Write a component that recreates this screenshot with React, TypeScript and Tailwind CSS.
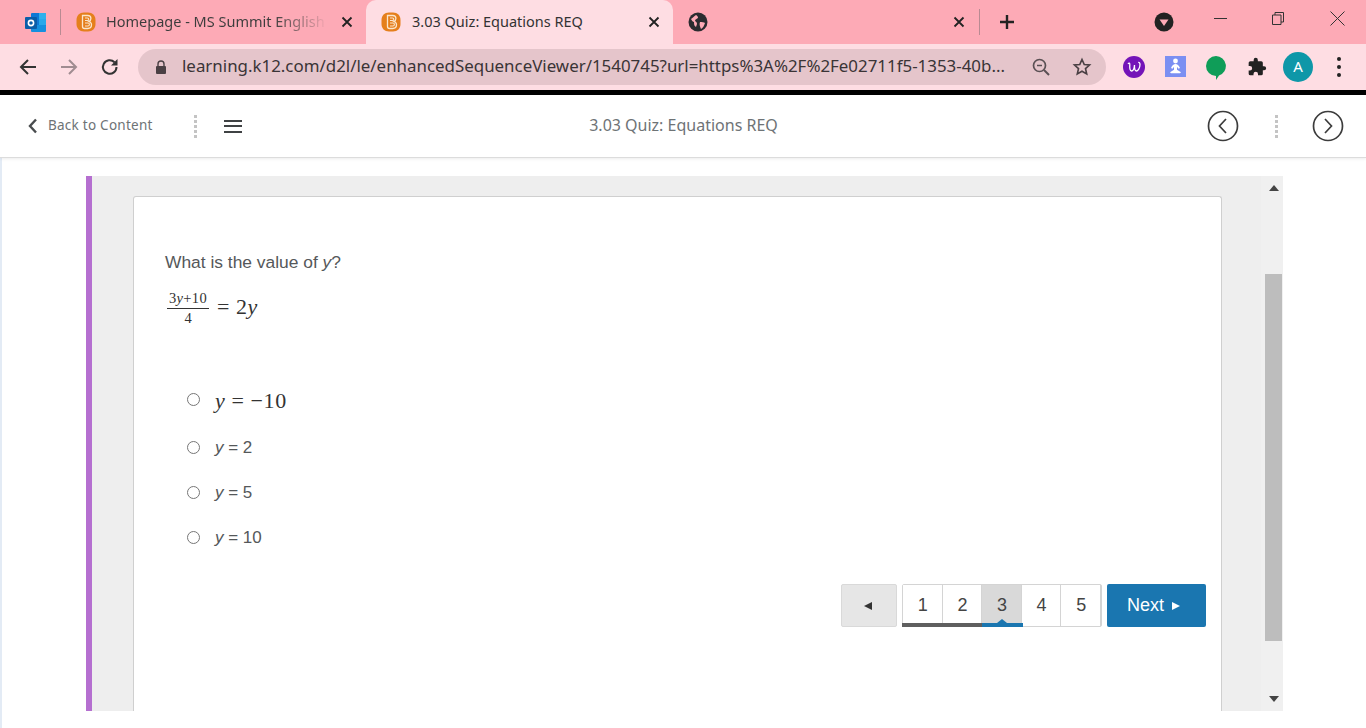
import React from 'react';

const uiFont = "font-['Noto_Sans',sans-serif]";
const arial = "font-['Liberation_Sans',Arial,sans-serif]";
const mathFont = "font-['Liberation_Serif','Times_New_Roman',serif]";

// Brightspace logo used in both tabs
const BrightspaceIcon = () => (
  <svg width="20" height="20" viewBox="0 0 20 20" className="shrink-0">
    <path d="M8 .5h4c4.500 0 7.500 3 7.500 7.500v4c0 4.500-3 7.500-7.500 7.500H8C3.500 19.500.5 16.500.5 12V8C.5 3.500 3.500.5 8 .5Z" fill="#e57f1c" />
    <path d="M6.500 3.500h5.200c2 0 3.200 1.400 3.200 3 0 1.400-.8 2.500-2 3 1.600.5 2.600 1.700 2.600 3.300 0 2.200-1.600 3.700-3.800 3.700H8.500c-1.200 0-2-.8-2-2V3.500Z" fill="none" stroke="#fbe6cc" strokeWidth="1.300" />
    <path d="M9 6h2.500c.8 0 1.300.5 1.300 1.200S12 8.500 11.300 8.500H9M9 11h3c.8 0 1.400.6 1.400 1.400S12.800 14 12 14H9" fill="none" stroke="#fbe6cc" strokeWidth="1.100" />
  </svg>
);

const OutlookIcon = () => (
  <svg width="22" height="19" viewBox="0 0 22 19" className="shrink-0">
    <rect x="6" y="0" width="15" height="18" rx="1" fill="#0f78d4" />
    <rect x="14" y="0" width="7" height="6" fill="#2fb0ec" />
    <rect x="14" y="6" width="7" height="6" fill="#28a8ea" />
    <rect x="6" y="12" width="15" height="7" rx="1" fill="#1490df" />
    <rect x="0" y="4" width="12" height="12" rx="1" fill="#0a5ea8" />
    <circle cx="6" cy="10" r="2.600" fill="none" stroke="#fff" strokeWidth="1.600" />
  </svg>
);

const TabClose = () => (
  <svg width="12" height="12" viewBox="0 0 12 12" className="shrink-0">
    <path d="M1.500 1.500l9 9M10.500 1.500l-9 9" stroke="#222" strokeWidth="1.800" />
  </svg>
);

const GlobeIcon = () => (
  <svg width="20" height="20" viewBox="0 0 20 20" className="shrink-0">
    <circle cx="10" cy="10" r="9.500" fill="#2b2b2f" />
    <path d="M3 7c2-1 3-3 5-4 1 1 2 1 2 3-1 1-3 1-3 3 1 1 2 1 2 3l-1 3c-2-1-2-3-2-5-1 0-2-1-3-3Z M12 10c2 0 4 0 5 1-1 3-2 5-4 6-1-2-2-5-1-7Z" fill="#fdaab6" />
  </svg>
);

const CircleNav = ({ dir }: { dir: 'left' | 'right' }) => (
  <svg width="32" height="32" viewBox="0 0 32 32">
    <circle cx="16" cy="16" r="14.500" fill="none" stroke="#3c3c3c" strokeWidth="1.700" />
    <path d={dir === 'left' ? 'M19 9l-6.500 7 6.500 7' : 'M13 9l6.500 7-6.500 7'} fill="none" stroke="#3c3c3c" strokeWidth="1.700" />
  </svg>
);

const DotDivider = () => (
  <div className="flex flex-col gap-[2px]">
    {[0, 1, 2, 3, 4].map((i) => (
      <div key={i} className="w-[3px] h-[3px] bg-[#c4c4c4]" />
    ))}
  </div>
);

const Option = ({ gap, children }: { gap: string; children: React.ReactNode }) => (
  <div className={`flex items-center h-[24px] ${gap}`}>
    <input type="radio" name="answer" className="w-[13px] h-[13px] m-0 ml-[22px] shrink-0" />
    <div className={`ml-[15px] pt-[1px] text-[17px] text-[#55585a] ${arial}`}>{children}</div>
  </div>
);

const PageNum = ({ n, current }: { n: number; current?: boolean }) => (
  <div
    className={`flex-1 h-full flex items-center justify-center pl-[1px] text-[18px] text-[#444] border-r border-[#d4d4d4] last:border-r-0 ${
      current ? 'bg-[#d9d9d9]' : 'bg-white'
    }`}
  >
    {n}
  </div>
);

const App: React.FC = () => {
  return (
    <div className="h-[728px] w-[1366px] overflow-hidden flex flex-col bg-white">
      {/* Tab strip */}
      <div className={`h-[44px] bg-[#fdaab6] flex items-center shrink-0 ${uiFont}`}>
        <div className="ml-[25px]"><OutlookIcon /></div>
        <div className="ml-[13px] w-px h-[26px] bg-[#b98a92]" />
        <div className="ml-[15px]"><BrightspaceIcon /></div>
        <div className="ml-[10px] w-[222px] whitespace-nowrap overflow-hidden text-[14.500px] bg-linear-to-r from-[#3c3c3c] from-75% to-[#fdaab6] bg-clip-text text-transparent">
          Homepage - MS Summit English
        </div>
        <div className="ml-[13px]"><TabClose /></div>
        <div className="ml-[13px] w-[307px] h-[44px] bg-[#fedde3] rounded-t-[10px] flex items-center">
          <div className="ml-[15px]"><BrightspaceIcon /></div>
          <div className="ml-[11px] w-[235px] whitespace-nowrap text-[14.500px] text-[#333]">3.03 Quiz: Equations REQ</div>
          <div className="ml-[1px]"><TabClose /></div>
        </div>
        <div className="ml-[15px]"><GlobeIcon /></div>
        <div className="ml-[245px]"><TabClose /></div>
        <div className="ml-[14px] w-px h-[26px] bg-[#b98a92]" />
        <svg width="16" height="16" viewBox="0 0 16 16" className="ml-[19px]">
          <path d="M8 1v14M1 8h14" stroke="#222" strokeWidth="2.400" />
        </svg>
        <svg width="20" height="20" viewBox="0 0 20 20" className="ml-[139px]">
          <circle cx="10" cy="10" r="9.500" fill="#222" />
          <path d="M5.500 7.500h9L10 14Z" fill="#fdaab6" />
        </svg>
        <div className="ml-[40px] w-[13px] h-px bg-[#333] -mt-[7px]" />
        <svg width="12" height="13" viewBox="0 0 12 13" className="ml-[45px] -mt-[7px]">
          <path d="M.5 3h8.500v9.500H.5ZM3 3V.5h8.500V10H9" fill="none" stroke="#333" />
        </svg>
        <svg width="15" height="15" viewBox="0 0 15 15" className="ml-[46px] -mt-[7px]">
          <path d="M.5.5l14 14M14.500.5l-14 14" stroke="#333" strokeWidth="1" />
        </svg>
      </div>

      {/* Address bar */}
      <div className="h-[46px] bg-[#fedde3] flex items-center shrink-0">
        <svg width="20" height="20" viewBox="0 0 20 20" className="ml-[18px] -mt-[1px]">
          <path d="M18 10H3M10 3l-7 7 7 7" fill="none" stroke="#333" strokeWidth="2" />
        </svg>
        <svg width="20" height="20" viewBox="0 0 20 20" className="ml-[21px] -mt-[1px]">
          <path d="M2 10h15M10 3l7 7-7 7" fill="none" stroke="#a08c91" strokeWidth="2" />
        </svg>
        <svg width="20" height="20" viewBox="0 0 20 20" className="ml-[21px] -mt-[1px]">
          <path d="M16.500 10a6.800 6.800 0 1 1-2-4.800" fill="none" stroke="#333" strokeWidth="2" />
          <path d="M17.500 2v6.500H11Z" fill="#333" />
        </svg>
        <div className={`ml-[18px] w-[968px] h-[36px] rounded-full bg-[#e5c5cb] flex items-center ${uiFont}`}>
          <svg width="12" height="14" viewBox="0 0 12 14" className="ml-[17px]">
            <path d="M3 6V4a3 3 0 0 1 6 0v2" fill="none" stroke="#4a4044" strokeWidth="1.400" />
            <rect x="1" y="6" width="10" height="8" rx="1" fill="#4a4044" />
          </svg>
          <div className="ml-[15px] -mt-[2px] w-[830px] whitespace-nowrap text-[16.900px] text-[#3a3436]">
            learning.k12.com/d2l/le/enhancedSequenceViewer/1540745?url=https%3A%2F%2Fe02711f5-1353-40b...
          </div>
          <svg width="20" height="20" viewBox="0 0 20 20" className="ml-[19px]">
            <circle cx="8.500" cy="8.500" r="6" fill="none" stroke="#5a5054" strokeWidth="1.700" />
            <path d="M13 13l5 5" stroke="#5a5054" strokeWidth="1.900" />
            <path d="M6 8.500h5" stroke="#5a5054" strokeWidth="1.500" />
          </svg>
          <svg width="20" height="20" viewBox="0 0 24 24" className="ml-[21px]">
            <path d="M12 3l2.700 6 6.300.6-4.800 4.300 1.400 6.400L12 17l-5.600 3.300 1.400-6.400L3 9.600 9.300 9Z" fill="none" stroke="#4a4044" strokeWidth="2" />
          </svg>
        </div>
        <svg width="22" height="22" viewBox="0 0 22 22" className="ml-[17px] -mt-[1px]">
          <circle cx="11" cy="11" r="11" fill="#7414b8" />
          <path d="M5 8c1-1.500 2-1 1.800 1-.3 3 .2 6 1.700 6s2.800-3 3-6c-.2 3 .3 6 1.800 6s3.700-3 3.700-6.500c0-1.500-1-2.500-1.800-2" fill="none" stroke="#fff" strokeWidth="1.300" />
        </svg>
        <svg width="21" height="21" viewBox="0 0 21 21" className="ml-[20px] -mt-[1px]">
          <rect width="21" height="21" fill="#7b8ff2" />
          <circle cx="10.500" cy="5" r="2.400" fill="#fff" />
          <path d="M10.500 8c-2 0-3 1-4.500 4l1.500.8 1.500-2v3l-4 2.500 1 1h9l1-1-4-2.500v-3l1.500 2 1.500-.8c-1.500-3-2.500-4-4.500-4Z" fill="#fff" />
        </svg>
        <svg width="20" height="24" viewBox="0 0 20 24" className="ml-[20px] mt-[1px]">
          <path d="M10 0a10 10 0 0 1 3 19.500L10 24v-4A10 10 0 0 1 10 0Z" fill="#0f9d58" />
        </svg>
        <svg width="20" height="20" viewBox="0 0 24 24" className="ml-[21px] -mt-[1px]">
          <path d="M20.500 11H19V7a2 2 0 0 0-2-2h-4V3.500a2.500 2.500 0 0 0-5 0V5H4a2 2 0 0 0-2 2v3.800h1.500a2.700 2.700 0 0 1 0 5.400H2V20a2 2 0 0 0 2 2h3.800v-1.500a2.700 2.700 0 0 1 5.400 0V22H17a2 2 0 0 0 2-2v-4h1.500a2.500 2.500 0 0 0 0-5Z" fill="#222" />
        </svg>
        <div className={`ml-[16px] -mt-[1px] w-[30px] h-[30px] rounded-full bg-[#0e97a8] text-white text-[15px] flex items-center justify-center ${uiFont}`}>A</div>
        <div className="ml-[24px] -mt-[1px] flex flex-col gap-[4px]">
          <div className="w-[4px] h-[4px] rounded-full bg-[#222]" />
          <div className="w-[4px] h-[4px] rounded-full bg-[#222]" />
          <div className="w-[4px] h-[4px] rounded-full bg-[#222]" />
        </div>
      </div>

      <div className="h-[5px] bg-black shrink-0" />

      {/* Content nav */}
      <div className={`h-[63px] bg-white border-b border-[#dcdcdc] shadow-[0_1px_3px_rgba(0,0,0,0.08)] flex items-center shrink-0 relative ${uiFont}`}>
        <svg width="10" height="16" viewBox="0 0 10 16" className="ml-[28px]">
          <path d="M8 1.500L2 8l6 6.500" fill="none" stroke="#494c4e" strokeWidth="2.400" />
        </svg>
        <div className="ml-[10px] -mt-[1px] w-[146px] text-[13.500px] text-[#6e7376] tracking-[0.25px]">Back to Content</div>
        <DotDivider />
        <div className="ml-[27px] w-[18px] flex flex-col gap-[3.500px]">
          <div className="h-[2px] bg-[#3f4244]" />
          <div className="h-[2px] bg-[#3f4244]" />
          <div className="h-[2px] bg-[#3f4244]" />
        </div>
        <div className="ml-[346px] -mt-[2px] w-[191px] text-center whitespace-nowrap text-[16px] text-[#6e7376]">3.03 Quiz: Equations REQ</div>
        <div className="ml-[428px]"><CircleNav dir="left" /></div>
        <div className="ml-[36px]"><DotDivider /></div>
        <div className="ml-[34px]"><CircleNav dir="right" /></div>
      </div>

      {/* Page body */}
      <div className="flex-1 min-h-0 flex flex-col border-l-2 border-[#e3ebf5]">
        <div className="h-[18px] shrink-0" />
        <div className="ml-[84px] w-[1197px] h-[535px] shrink-0 bg-[#eeeeee] border-l-[6px] border-[#b56fd0] flex">
          <div className="ml-[41px] mt-[20px] w-[1089px] bg-white border border-b-0 border-[#cfcfcf] rounded-t-[3px] pl-[31px] pt-[55px] shrink-0">
            <div className={`text-[17.400px] leading-[20px] text-[#55585a] ${arial}`}>
              What is the value of <i>y</i>?
            </div>
            <div className={`mt-[18px] ml-[2px] flex items-center text-[#333] ${mathFont}`}>
              <div className="flex flex-col items-center w-[42px]">
                <div className="text-[14.500px] leading-[16px] border-b border-[#333] w-full text-center pb-[2px] tracking-[0.3px] whitespace-nowrap">3<i>y</i>+10</div>
                <div className="text-[14.500px] leading-[16px] pt-[1px]">4</div>
              </div>
              <div className="ml-[8px] pb-[2px] text-[22px] leading-[24px] whitespace-nowrap tracking-[0.5px]">= 2<i>y</i></div>
            </div>

            <Option gap="mt-[61px]">
              <span className={`block pt-[2px] ${mathFont} text-[22px] text-[#333] tracking-[0.6px]`}><i>y</i> = −10</span>
            </Option>
            <Option gap="mt-[24px]"><i>y</i> = 2</Option>
            <Option gap="mt-[21px]"><i>y</i> = 5</Option>
            <Option gap="mt-[21px]"><i>y</i> = 10</Option>

            {/* Pager */}
            <div className={`mt-[35px] mr-[15px] flex justify-end items-stretch h-[43px] ${arial}`}>
              <div className="w-[56px] bg-[#e6e6e6] border border-[#d9d9d9] rounded-[2px] flex items-center justify-center pr-[2px]">
                <div className="w-0 h-0 border-y-[4px] border-y-transparent border-r-[8px] border-r-[#333]" />
              </div>
              <div className="ml-[5px] w-[200px] border border-[#d4d4d4] rounded-[2px] relative flex">
                <PageNum n={1} />
                <PageNum n={2} />
                <PageNum n={3} current />
                <PageNum n={4} />
                <PageNum n={5} />
                <div className="absolute -left-px -bottom-px w-[80px] h-[4px] bg-[#5f5f5f]" />
                <div className="absolute left-[79px] -bottom-px w-[41px] h-[4px] bg-[#1a76b0]" />
                <div className="absolute left-[94px] bottom-[3px] w-0 h-0 border-x-[5px] border-x-transparent border-b-[4px] border-b-[#1a76b0]" />
              </div>
              <div className="ml-[5px] w-[99px] bg-[#1a76b0] rounded-[2px] text-white text-[18px] flex items-center justify-center gap-[8px] pr-[6px]">
                Next
                <div className="w-0 h-0 border-y-[4px] border-y-transparent border-l-[8px] border-l-white" />
              </div>
            </div>
          </div>

          {/* Scrollbar */}
          <div className="ml-[39px] w-[22px] pl-[4px] pr-[1px] bg-[#f0f0f0] flex flex-col items-center shrink-0">
            <div className="h-[98px] w-full shrink-0 flex justify-center pt-[9px]">
              <div className="w-0 h-0 border-x-[5px] border-x-transparent border-b-[6px] border-b-[#444]" />
            </div>
            <div className="h-[367px] w-full bg-[#bdbdbd] shrink-0" />
            <div className="flex-1 flex items-end pb-[9px]">
              <div className="w-0 h-0 border-x-[5px] border-x-transparent border-t-[6px] border-t-[#444]" />
            </div>
          </div>
        </div>
      </div>
    </div>
  );
};

export default App;
